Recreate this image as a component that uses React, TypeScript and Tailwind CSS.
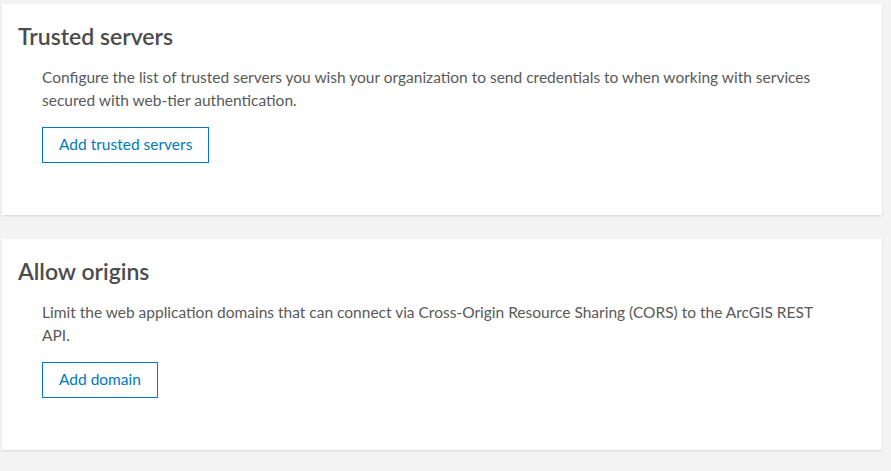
export default function App() {
  const font = { fontFamily: '"Lato", "Noto Sans", sans-serif' };
  return (
    <div className="min-h-[471px] w-[891px] bg-[#f3f3f3] pt-[4px] pl-[2px] pr-[9px] pb-[20px]" style={font}>
      {/* Trusted servers */}
      <section className="h-[211px] bg-white shadow-[0_1px_2px_rgba(0,0,0,0.12)] pl-[16px] pt-[18px]">
        <h2 className="text-[23px] leading-[28px] font-semibold text-[#4c4c4c]">Trusted servers</h2>
        <div className="pl-[24px] pr-[52px]">
          <p className="mt-[16px] text-[15.5px] leading-[23px] text-[#595959]">
            Configure the list of trusted servers you wish your organization to send credentials to when working with services secured with web-tier authentication.
          </p>
          <button className="mt-[15px] h-[36px] px-[16px] border border-[#0079c1] text-[15.5px] text-[#0079c1] bg-white">
            Add trusted servers
          </button>
        </div>
      </section>

      {/* Allow origins */}
      <section className="mt-[24px] h-[211px] bg-white shadow-[0_1px_2px_rgba(0,0,0,0.12)] pl-[16px] pt-[18px]">
        <h2 className="text-[23px] leading-[28px] font-semibold text-[#4c4c4c]">Allow origins</h2>
        <div className="pl-[24px] pr-[52px]">
          <p className="mt-[16px] text-[15.5px] leading-[23px] text-[#595959]">
            Limit the web application domains that can connect via Cross-Origin Resource Sharing (CORS) to the ArcGIS REST API.
          </p>
          <button className="mt-[15px] h-[36px] px-[16px] border border-[#0079c1] text-[15.5px] text-[#0079c1] bg-white">
            Add domain
          </button>
        </div>
      </section>
    </div>
  );
}
